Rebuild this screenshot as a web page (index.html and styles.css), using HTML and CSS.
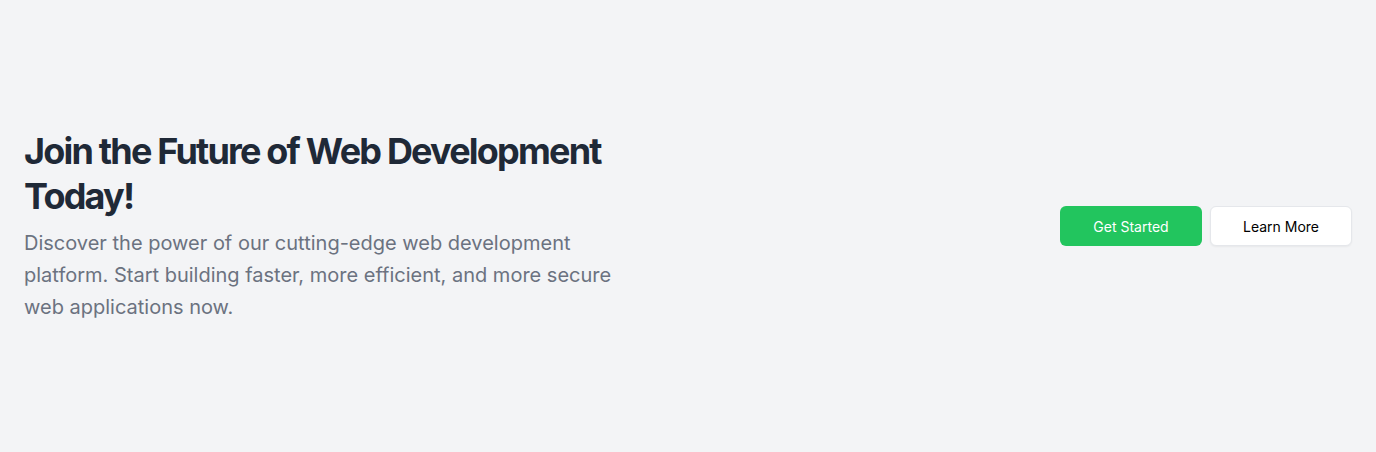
FILE: index.html
```html
<!DOCTYPE html>
<html lang="en">
<head>
<meta charset="utf-8">
<title>Join the Future</title>
<link rel="stylesheet" href="styles.css">
</head>
<body>
<section class="cta">
  <div class="cta-text">
    <h1 class="cta-title">Join the Future of Web Development Today!</h1>
    <p class="cta-desc">Discover the power of our cutting-edge web development platform. Start building faster, more efficient, and more secure web applications now.</p>
  </div>
  <div class="cta-actions">
    <a class="btn btn-primary" href="#">Get Started</a>
    <a class="btn btn-secondary" href="#">Learn More</a>
  </div>
</section>
</body>
</html>
```
FILE: styles.css
```css
html, body {
  margin: 0;
  padding: 0;
  height: 100%;
}
body {
  background: #f3f4f6;
  font-family: Inter, "Noto Sans", sans-serif;
}
.cta {
  box-sizing: border-box;
  height: 452px;
  padding: 0 24px;
  display: flex;
  align-items: center;
  justify-content: space-between;
}
.cta-text {
  max-width: 600px;
}
.cta-title {
  margin: 0;
  font-size: 36px;
  line-height: 45px;
  font-weight: 700;
  letter-spacing: -0.05em;
  color: #1f2937;
}
.cta-desc {
  margin: 8px 0 0;
  font-size: 20px;
  line-height: 32px;
  color: #6b7280;
}
.cta-actions {
  display: flex;
  gap: 8px;
}
.btn {
  box-sizing: border-box;
  width: 142px;
  height: 40px;
  display: flex;
  align-items: center;
  justify-content: center;
  border-radius: 6px;
  font-size: 14px;
  font-weight: 400;
  text-decoration: none;
}
.btn-primary {
  background: #22c55e;
  color: #ffffff;
}
.btn-secondary {
  background: #ffffff;
  color: #000000;
  border: 1px solid #e5e7eb;
  box-shadow: 0 1px 2px rgba(0,0,0,0.05);
}
```
